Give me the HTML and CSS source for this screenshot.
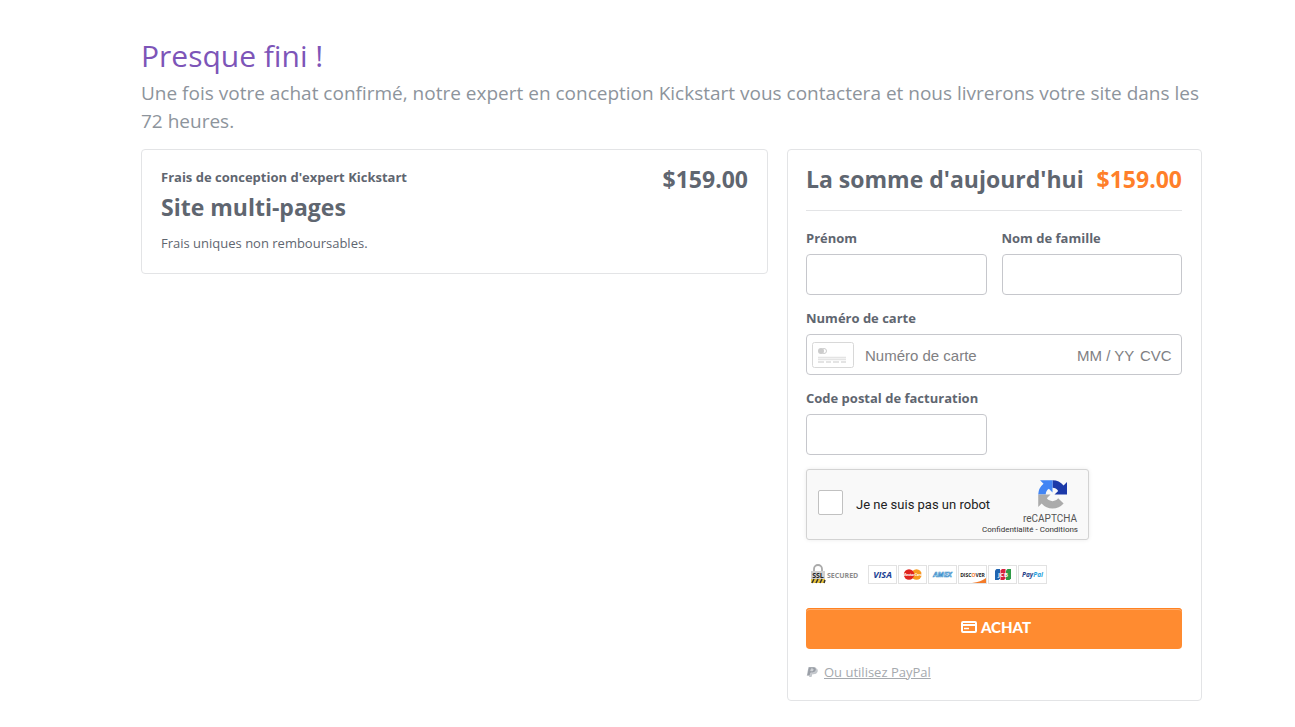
FILE: index.html
```html
<!DOCTYPE html>
<html lang="fr">
<head>
<meta charset="utf-8">
<meta name="viewport" content="width=device-width, initial-scale=1">
<title>Presque fini !</title>
<link rel="stylesheet" href="styles.css">
</head>
<body>
<main class="page">
  <h1 class="title">Presque fini !</h1>
  <p class="lead">Une fois votre achat confirmé, notre expert en conception Kickstart vous contactera et nous livrerons votre site dans les 72 heures.</p>
  <div class="columns">
    <section class="card order">
      <div>
        <p class="order-label">Frais de conception d'expert Kickstart</p>
        <h2 class="order-name">Site multi-pages</h2>
        <p class="order-note">Frais uniques non remboursables.</p>
      </div>
      <p class="price">$159.00</p>
    </section>
    <form class="card payment">
      <header class="total">
        <h2 class="total-label">La somme d'aujourd'hui</h2>
        <p class="price price-accent">$159.00</p>
      </header>
      <div class="row">
        <div class="field">
          <label for="first">Prénom</label>
          <input class="box" id="first" type="text">
        </div>
        <div class="field">
          <label for="last">Nom de famille</label>
          <input class="box" id="last" type="text">
        </div>
      </div>
      <div class="field">
        <label for="card">Numéro de carte</label>
        <div class="box card-box">
          <svg class="card-icon" viewBox="0 0 42 26" aria-hidden="true">
            <rect x="0.5" y="0.5" width="41" height="25" rx="2" fill="#fff" stroke="#d8d8d8"/>
            <circle cx="12" cy="9" r="2.5" fill="#fff" stroke="#ccc"/>
            <circle cx="9" cy="9" r="3" fill="#ccc"/>
            <path d="M6 15.5h28M6 17.500h28" stroke="#e4e4e4" stroke-width="1.500"/>
            <path d="M6 20h6M14 20h5M21 20h6M29 20h5" stroke="#dcdcdc" stroke-width="1.500"/>
          </svg>
          <input class="bare number" id="card" type="text" placeholder="Numéro de carte">
          <input class="bare expiry" type="text" placeholder="MM / YY" aria-label="Date d'expiration">
          <input class="bare cvc" type="text" placeholder="CVC" aria-label="CVC">
        </div>
      </div>
      <div class="row">
        <div class="field">
          <label for="zip">Code postal de facturation</label>
          <input class="box" id="zip" type="text">
        </div>
      </div>
      <div class="captcha">
        <input class="captcha-check" id="robot" type="checkbox">
        <label class="captcha-label" for="robot">Je ne suis pas un robot</label>
        <div class="captcha-brand">
          <svg class="captcha-logo" viewBox="0 0 64 64" aria-hidden="true">
            <path d="M64 32V4.500L56.400 12.200A32 32 0 0 0 32 .5V17a15 15 0 0 1 12.500 7L36.400 32z" fill="#1c3aa9"/>
            <path d="M32 .5H4.500L12.200 8.100A32 32 0 0 0 .5 32H17a15 15 0 0 1 7-12.500L32 27.600z" fill="#4285f4"/>
            <path d="M.5 32V59.500L8 51.900A32 32 0 0 0 56.500 52L44.500 40A15 15 0 0 1 19.500 40L27.600 32z" fill="#ababab"/>
          </svg>
          <span class="captcha-name">reCAPTCHA</span>
          <span class="captcha-links"><a href="#">Confidentialité</a> - <a href="#">Conditions</a></span>
        </div>
      </div>
      <div class="badges">
        <svg class="ssl" viewBox="0 0 50 20" role="img" aria-label="SSL Secured">
          <path d="M4 8V5a4 4 0 0 1 8 0v3" fill="none" stroke="#aaa" stroke-width="1.800"/>
          <rect x="1" y="7" width="14" height="12" fill="#d0d0d0"/>
          <rect x="1" y="15" width="14" height="4" fill="#e8c33a"/>
          <path d="M2 19l2-4M6 19l2-4M10 19l2-4M14 19l1-3" stroke="#333" stroke-width="1.500"/>
          <text x="8" y="14" class="logo-text" font-size="7" text-anchor="middle" fill="#222">SSL</text>
          <text x="17" y="14" class="logo-text" font-size="7" fill="#8c8c8c">SECURED</text>
        </svg>
        <svg class="brand" viewBox="0 0 29 19" role="img" aria-label="Visa">
          <rect x=".5" y=".5" width="28" height="18" fill="#fff" stroke="#e2e2e2"/>
          <text x="14.500" y="12.500" class="logo-text slant" font-size="9" text-anchor="middle" fill="#1a3f94">VISA</text>
        </svg>
        <svg class="brand" viewBox="0 0 29 19" role="img" aria-label="MasterCard">
          <rect x=".5" y=".5" width="28" height="18" fill="#fff" stroke="#e2e2e2"/>
          <circle cx="18.500" cy="9.500" r="5.200" fill="#f79a1f"/>
          <circle cx="11" cy="9.500" r="5.200" fill="#e0241f"/>
          <text x="14.700" y="11" class="logo-text slant" font-size="3.500" text-anchor="middle" fill="#fff">MasterCard</text>
        </svg>
        <svg class="brand" viewBox="0 0 29 19" role="img" aria-label="American Express">
          <rect x=".5" y=".5" width="28" height="18" fill="#fff" stroke="#e2e2e2"/>
          <text x="14.500" y="12.300" class="logo-text slant" font-size="7" text-anchor="middle" fill="#d9effb" stroke="#3c8fcb" stroke-width=".6">AMEX</text>
        </svg>
        <svg class="brand" viewBox="0 0 29 19" role="img" aria-label="Discover">
          <rect x=".5" y=".5" width="28" height="18" fill="#fff" stroke="#e2e2e2"/>
          <path d="M14 18Q23 17 28 13V18z" fill="#f47b29"/>
          <text x="14.500" y="11.500" class="logo-text" font-size="5" text-anchor="middle" fill="#222">DISC<tspan fill="#f47b29">O</tspan>VER</text>
        </svg>
        <svg class="brand" viewBox="0 0 29 19" role="img" aria-label="JCB">
          <rect x=".5" y=".5" width="28" height="18" fill="#fff" stroke="#e2e2e2"/>
          <path d="M8.500 4H12v9.500L10.500 15H7V5.500z" fill="#2064b0"/>
          <path d="M14 4h3.500v9.500L16 15h-3.500V5.500z" fill="#d52340"/>
          <path d="M19.500 4H23v9.500L21.500 15H18V5.500z" fill="#2e9b46"/>
          <text x="15" y="11.500" class="logo-text" font-size="6" text-anchor="middle" fill="#fff">JCB</text>
        </svg>
        <svg class="brand" viewBox="0 0 29 19" role="img" aria-label="PayPal">
          <rect x=".5" y=".5" width="28" height="18" fill="#fff" stroke="#e2e2e2"/>
          <text x="14.500" y="12" class="logo-text slant" font-size="6.500" text-anchor="middle" fill="#1f3c85">Pay<tspan fill="#1f9fdc">Pal</tspan></text>
        </svg>
      </div>
      <button class="buy" type="submit">
        <svg class="buy-icon" viewBox="0 0 16 12" aria-hidden="true">
          <rect x="1" y="1" width="14" height="10" rx="1" fill="none" stroke="#fff" stroke-width="2"/>
          <path d="M1 4h14" stroke="#fff" stroke-width="2"/>
          <path d="M3 7.500h5" stroke="#fff" stroke-width="1.500"/>
        </svg>
        ACHAT
      </button>
      <p class="alt">
        <svg class="pp" viewBox="0 0 12 12" aria-hidden="true">
          <path d="M5 2.500H10.500Q12.300 3.500 11.500 6Q10.600 8.200 7.500 8.200H6.300L5.500 11H3z" fill="#c3c7cc"/>
          <path fill-rule="evenodd" d="M2.500 1H8Q10.600 1.400 10.200 3.800Q9.500 6.800 6.500 6.800H4.700L3.900 9.800H.8zM5.100 2.800L4.700 5H6Q7.200 4.800 7.300 3.900Q7.400 2.800 6.300 2.800z" fill="#9a9fa7" stroke="#fff" stroke-width=".3"/>
        </svg>
        <a href="#">Ou utilisez PayPal</a>
      </p>
    </form>
  </div>
</main>
</body>
</html>
```
FILE: styles.css
```css
* { box-sizing: border-box; }
body {
  margin: 0;
  background: #fff;
  color: #5f6670;
  font-family: "Open Sans", "Noto Sans", sans-serif;
  font-size: 13px;
  line-height: 20px;
}
h1, h2, p { margin: 0; }
input, button { font: inherit; }
.page { padding: 36px 93px 26px 141px; }
.title { color: #7d55b8; font-size: 30px; line-height: 40px; font-weight: 400; }
.lead { margin: 3px 0 14px; color: #8d949c; font-size: 19px; line-height: 28px; }
.columns {
  display: grid;
  grid-template-columns: minmax(0, 627fr) minmax(0, 415fr);
  gap: 19px;
  align-items: start;
}
.card { border: 1px solid #e3e4e6; border-radius: 4px; padding: 14px 19px 18px; }
.order { display: flex; justify-content: space-between; padding-bottom: 20px; }
.order-label { margin-top: 4px; line-height: 18px; font-weight: 700; }
.order-name, .price, .total-label { font-size: 23px; line-height: 30px; font-weight: 700; }
.order-name { margin: 6px 0 11px; }
.payment { padding-left: 18px; }
.total {
  display: flex;
  justify-content: space-between;
  padding-bottom: 16px;
  margin-bottom: 18px;
  border-bottom: 1px solid #e3e4e6;
}
.price-accent { color: #ff7f2a; }
.row { display: grid; grid-template-columns: 1fr 1fr; gap: 15px; }
.field { margin-bottom: 14px; min-width: 0; }
.field label { display: block; margin-bottom: 7px; line-height: 18px; font-weight: 700; white-space: nowrap; }
.box {
  display: block;
  width: 100%;
  height: 41px;
  padding: 0 10px;
  border: 1px solid #c6c7cc;
  border-radius: 4px;
  background: #fff;
}
.card-box {
  display: flex;
  align-items: center;
  padding: 0 8px 0 5px;
  font-family: "Liberation Sans", sans-serif;
  font-size: 15px;
}
.card-icon { width: 42px; height: 26px; margin-right: 11px; flex: none; }
.bare { min-width: 0; padding: 2px 0 0; border: 0; background: none; color: #333; }
.bare::placeholder { color: #808083; opacity: 1; }
.number { flex: 1; }
.expiry { width: 63px; }
.cvc { width: 33px; }
.captcha {
  display: flex;
  align-items: center;
  width: 283px;
  height: 71px;
  padding: 0 10px 0 11px;
  border: 1px solid #d3d3d3;
  border-radius: 3px;
  background: #f9f9f9;
  box-shadow: 0 0 4px rgba(0, 0, 0, .08);
  color: #222;
  font-family: Roboto, sans-serif;
}
.captcha-check {
  appearance: none;
  width: 25px;
  height: 25px;
  margin: 0 13px 4px 0;
  border: 1px solid #c1c1c1;
  border-radius: 2px;
  background: #fff;
}
.captcha-label { white-space: nowrap; }
.captcha-brand {
  display: flex;
  flex: 1;
  flex-direction: column;
  align-items: flex-end;
  min-width: 0;
  padding-top: 6px;
  color: #555;
}
.captcha-logo { width: 29px; height: 29px; margin: 0 11px 4px 0; }
.captcha-name { padding-right: 1px; font-size: 10px; line-height: 12px; }
.captcha-links { color: #333; font-size: 8px; line-height: 10px; white-space: nowrap; }
.captcha-links a { color: inherit; text-decoration: none; }
.badges { display: flex; align-items: center; gap: 1px; margin: 24px 0 24px 4px; }
.ssl { width: 50px; height: 20px; margin-right: 7px; }
.brand { width: 29px; height: 19px; }
.logo-text { font-family: "Open Sans", sans-serif; font-weight: 700; }
.slant { font-style: italic; }
.buy {
  display: flex;
  align-items: center;
  justify-content: center;
  gap: 4px;
  width: 100%;
  height: 41px;
  padding: 0 0 3px 4px;
  border: 0;
  border-radius: 4px;
  background: #ff8b30;
  box-shadow: inset 0 1px #ff8222, inset 0 2px #ffab6a;
  color: #fff;
  font-family: Lato, sans-serif;
  font-size: 15px;
  font-weight: 900;
}
.buy-icon { width: 16px; height: 12px; }
.alt { display: flex; align-items: center; gap: 6px; margin-top: 13px; color: #a5a9ae; }
.alt a { color: inherit; }
.pp { width: 12px; height: 12px; }
```
